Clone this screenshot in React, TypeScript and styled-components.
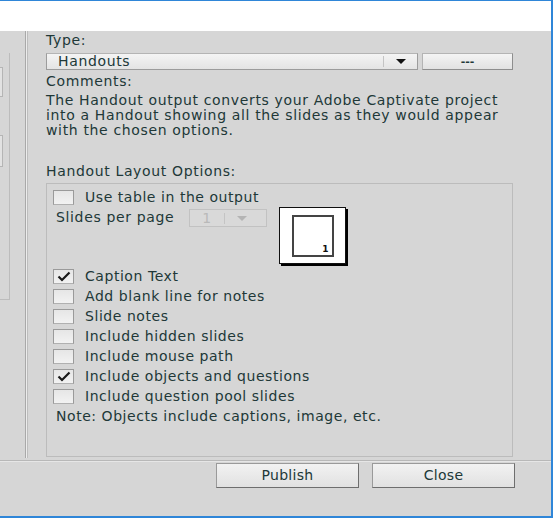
import React from "react";
import styled, { createGlobalStyle } from "styled-components";

const Global = createGlobalStyle`
  html, body { margin: 0; padding: 0; background: #ffffff; }
  body { font-family: "DejaVu Sans", Verdana, sans-serif; }
`;

const Frame = styled.div`
  width: 551px;
  height: 515px;
  border-top: 1px solid #2f86d8;
  border-right: 2px solid #2f86d8;
  border-bottom: 2px solid #2f86d8;
  display: flex;
  flex-direction: column;
  background: #d6d6d6;
  color: #213838;
  font-size: 14px;
  letter-spacing: 0.65px;
  overflow: hidden;
`;

const Header = styled.div`
  height: 30px;
  background: #ffffff;
  flex: none;
`;

const Main = styled.div`
  display: flex;
  flex: none;
  height: 427px;
`;

const LeftPane = styled.div`
  width: 25px;
  flex: none;
  border-right: 1px solid #a9a9a9;
  box-shadow: 1px 0 0 #ececec, 2px 0 0 #bdbdbd;
  padding-top: 22px;
`;

const LeftInner = styled.div`
  width: 9px;
  height: 232px;
  border-right: 1px solid #bcbcbc;
  border-bottom: 1px solid #bcbcbc;
  display: flex;
  flex-direction: column;
  padding-top: 14px;
  gap: 38px;
`;

const LeftStub = styled.div<{ $h: number }>`
  width: 2px;
  height: ${(p) => p.$h}px;
  border: 1px solid #b5b5b5;
  border-left: none;
  background: #e2e2e2;
`;

const RightPane = styled.div`
  flex: 1;
  padding-left: 20px;
  display: flex;
  flex-direction: column;
`;

const Label = styled.div<{ $mt?: number }>`
  line-height: 17px;
  margin-top: ${(p) => p.$mt ?? 0}px;
  white-space: nowrap;
`;

const TypeRow = styled.div`
  display: flex;
  gap: 4px;
  margin-top: 4px;
  height: 17px;
`;

const Select = styled.div`
  width: 370px;
  height: 15px;
  border: 1px solid #9c9c9c;
  border-top-color: #b4b4b4;
  background: linear-gradient(#f4f4f4, #e4e4e4);
  display: flex;
  align-items: center;
  box-sizing: content-box;
`;

const SelectText = styled.span`
  flex: 1;
  padding-left: 11px;
  line-height: 15px;
`;

const SelectDivider = styled.span`
  width: 1px;
  height: 11px;
  background: #c4c4c4;
`;

const Arrow = styled.span<{ $color?: string }>`
  width: 0;
  height: 0;
  border-left: 5px solid transparent;
  border-right: 5px solid transparent;
  border-top: 5px solid ${(p) => p.$color ?? "#111"};
  margin: 0 11px 0 12px;
`;

const DotsButton = styled.div`
  width: 89px;
  height: 15px;
  border: 1px solid #8e8e8e;
  border-top-color: #b4b4b4;
  border-left-color: #b4b4b4;
  background: linear-gradient(#f4f4f4, #e2e2e2);
  display: flex;
  align-items: center;
  justify-content: center;
  font-size: 11px;
  font-weight: bold;
  line-height: 15px;
  letter-spacing: 0;
`;

const Paragraph = styled.p`
  margin: 3px 0 0 0;
  line-height: 15px;
  width: 480px;
`;

const Group = styled.div`
  margin-top: 3px;
  width: 467px;
  height: 274px;
  border: 1px solid #bcbcbc;
  box-sizing: border-box;
  padding: 3px 0 0 6px;
  display: flex;
  flex-direction: column;
`;

const CheckRow = styled.label`
  display: flex;
  align-items: center;
  height: 20px;
  gap: 11px;
  white-space: nowrap;
  letter-spacing: 0.55px;
`;

const Box = styled.span`
  width: 19px;
  height: 13px;
  border: 1px solid #9a9a9a;
  border-bottom-color: #b0b0b0;
  background: linear-gradient(#e6e6e6, #f2f2f2);
  display: flex;
  align-items: center;
  justify-content: center;
  flex: none;
`;

const SlidesRow = styled.div`
  display: flex;
  align-items: flex-start;
  height: 59px;
  padding-left: 3px;
`;

const SlidesLabel = styled.span`
  margin-top: 2px;
  width: 133px;
  line-height: 16px;
`;

const DisabledSelect = styled.div`
  width: 76px;
  height: 16px;
  border: 1px solid #c2c2c2;
  background: #d9d9d9;
  display: flex;
  align-items: center;
  color: #b9b9b9;
  margin-top: 2px;
`;

const DisabledText = styled.span`
  width: 34px;
  text-align: center;
  line-height: 16px;
`;

const PagePreview = styled.div`
  margin-left: 12px;
  width: 65px;
  height: 55px;
  border: 1px solid #111;
  background: #fff;
  box-shadow: 2px 2px 0 #000;
  display: flex;
  align-items: center;
  justify-content: center;
`;

const PageSheet = styled.div`
  width: 38px;
  height: 38px;
  border: 2px solid #444;
  background: #fff;
  position: relative;
`;

const PageNumber = styled.span`
  position: absolute;
  right: 3px;
  bottom: 1px;
  font-size: 9px;
  font-weight: bold;
  line-height: 10px;
  letter-spacing: 0;
  color: #111;
`;

const Note = styled.div`
  height: 20px;
  line-height: 20px;
  padding-left: 3px;
  white-space: nowrap;
  letter-spacing: 0.55px;
`;

const Separator = styled.div`
  height: 2px;
  border-top: 1px solid #b8b8b8;
  background: #e6e6e6;
  flex: none;
  margin-top: 2px;
  box-sizing: border-box;
`;

const Footer = styled.div`
  display: flex;
  gap: 13px;
  padding-left: 216px;
  padding-top: 1px;
`;

const Button = styled.div`
  width: 141px;
  height: 23px;
  border: 1px solid #9a9a9a;
  border-right-color: #6e6e6e;
  border-bottom-color: #6e6e6e;
  background: linear-gradient(#f2f2f2, #e1e1e1);
  display: flex;
  align-items: center;
  justify-content: center;
  line-height: 23px;
  letter-spacing: 0.3px;
`;

const Check = () => (
  <svg width="14" height="11" viewBox="0 0 14 11">
    <path d="M1.5 5.5 L5 9 L12.5 1.5" fill="none" stroke="#1a1a1a" strokeWidth="2.2" />
  </svg>
);

const options: { label: string; checked: boolean }[] = [
  { label: "Caption Text", checked: true },
  { label: "Add blank line for notes", checked: false },
  { label: "Slide notes", checked: false },
  { label: "Include hidden slides", checked: false },
  { label: "Include mouse path", checked: false },
  { label: "Include objects and questions", checked: true },
  { label: "Include question pool slides", checked: false },
];

export default function App() {
  return (
    <>
      <Global />
      <Frame>
        <Header />
        <Main>
          <LeftPane>
            <LeftInner>
              <LeftStub $h={28} />
              <LeftStub $h={30} />
            </LeftInner>
          </LeftPane>
          <RightPane>
            <Label $mt={1}>Type:</Label>
            <TypeRow>
              <Select>
                <SelectText>Handouts</SelectText>
                <SelectDivider />
                <Arrow />
              </Select>
              <DotsButton>---</DotsButton>
            </TypeRow>
            <Label $mt={3}>Comments:</Label>
            <Paragraph>
              The Handout output converts your Adobe Captivate project into a Handout showing all the slides as they
              would appear with the chosen options.
            </Paragraph>
            <Label $mt={25}>Handout Layout Options:</Label>
            <Group>
              <CheckRow>
                <Box />
                Use table in the output
              </CheckRow>
              <SlidesRow>
                <SlidesLabel>Slides per page</SlidesLabel>
                <DisabledSelect>
                  <DisabledText>1</DisabledText>
                  <SelectDivider />
                  <Arrow $color="#b4b4b4" />
                </DisabledSelect>
                <PagePreview>
                  <PageSheet>
                    <PageNumber>1</PageNumber>
                  </PageSheet>
                </PagePreview>
              </SlidesRow>
              {options.map((o) => (
                <CheckRow key={o.label}>
                  <Box>{o.checked && <Check />}</Box>
                  {o.label}
                </CheckRow>
              ))}
              <Note>Note: Objects include captions, image, etc.</Note>
            </Group>
          </RightPane>
        </Main>
        <Separator />
        <Footer>
          <Button>Publish</Button>
          <Button>Close</Button>
        </Footer>
      </Frame>
    </>
  );
}
